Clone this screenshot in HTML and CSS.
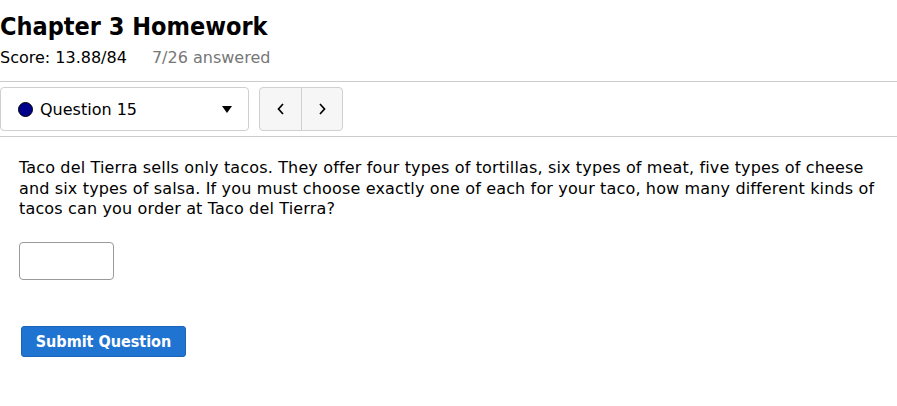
FILE: index.html
```html
<!DOCTYPE html>
<html>
<head>
<meta charset="utf-8">
<link rel="stylesheet" href="styles.css">
</head>
<body>
<div class="header">
  <h1 class="title">Chapter 3 Homework</h1>
  <div class="score">Score: 13.88/84 <span class="answered">7/26 answered</span></div>
</div>
<div class="navbar">
  <div class="qselect">
    <span class="dot"></span>
    <span class="qlabel">Question 15</span>
    <span class="caret"></span>
  </div>
  <div class="navbtns">
    <button class="navbtn"><svg width="10" height="14" viewBox="0 0 10 14"><path d="M7 2 L2.5 7 L7 12" fill="none" stroke="#000" stroke-width="1.7"/></svg></button>
    <button class="navbtn"><svg width="10" height="14" viewBox="0 0 10 14"><path d="M3 2 L7.5 7 L3 12" fill="none" stroke="#000" stroke-width="1.7"/></svg></button>
  </div>
</div>
<div class="question">
  <p class="qtext">Taco del Tierra sells only tacos. They offer four types of tortillas, six types of meat, five types of cheese and six types of salsa. If you must choose exactly one of each for your taco, how many different kinds of tacos can you order at Taco del Tierra?</p>
  <input class="answer" type="text">
  <div class="submitrow"><button class="submit">Submit Question</button></div>
</div>
</body>
</html>
```

FILE: styles.css
```css
html, body {
  margin: 0;
  padding: 0;
  background: #fff;
  color: #000;
  font-family: "DejaVu Sans", sans-serif;
}
.header {
  padding: 11px 0 0 0;
  border-bottom: 1px solid #cccccc;
  height: 82px;
  box-sizing: border-box;
}
.title {
  margin: 0;
  font-family: "DejaVu Sans Condensed", "DejaVu Sans", sans-serif;
  font-size: 25px;
  font-weight: bold;
  line-height: 32px;
}
.score {
  font-size: 16px;
  margin-top: 5px;
  line-height: 20px;
}
.answered {
  color: #777;
  margin-left: 20px;
}
.navbar {
  display: flex;
  align-items: center;
  gap: 10px;
  padding: 5px 0 5px 0;
  border-bottom: 1px solid #cccccc;
}
.qselect {
  width: 249px;
  height: 44px;
  box-sizing: border-box;
  border: 1px solid #cfcfcf;
  border-radius: 4px;
  display: flex;
  align-items: center;
  padding-left: 17px;
  padding-right: 10px;
  font-size: 16px;
}
.dot {
  width: 15px;
  height: 15px;
  border-radius: 50%;
  background: #00008b;
  border: 1px solid #000;
  box-sizing: border-box;
  margin-right: 7px;
}
.qlabel {
  flex: 1;
}
.caret {
  width: 0;
  height: 0;
  border-left: 5px solid transparent;
  border-right: 5px solid transparent;
  border-top: 7px solid #000;
  margin-right: 6px;
}
.navbtns {
  display: flex;
  height: 44px;
  border: 1px solid #d0d0d0;
  border-radius: 4px;
  background: #f6f6f6;
  box-sizing: border-box;
  overflow: hidden;
}
.navbtn {
  width: 41px;
  border: 0;
  background: transparent;
  padding: 0;
  display: flex;
  align-items: center;
  justify-content: center;
}
.navbtn + .navbtn {
  border-left: 1px solid #d0d0d0;
}
.question {
  padding: 21px 19px;
}
.qtext {
  margin: 0;
  font-size: 16px;
  letter-spacing: 0.15px;
  line-height: 20.5px;
  max-width: 860px;
}
.answer {
  display: block;
  margin-top: 22px;
  width: 95px;
  height: 38px;
  box-sizing: border-box;
  border: 1px solid #999;
  border-radius: 4px;
}
.submitrow {
  margin-top: 46px;
  padding-left: 2px;
}
.submit {
  background: #1f74d2;
  color: #fff;
  border: 1px solid #1a65b8;
  border-radius: 3px;
  font-family: "DejaVu Sans Condensed", "DejaVu Sans", sans-serif;
  font-size: 16px;
  font-weight: bold;
  height: 31px;
  width: 165px;
  padding: 0;
}
```
